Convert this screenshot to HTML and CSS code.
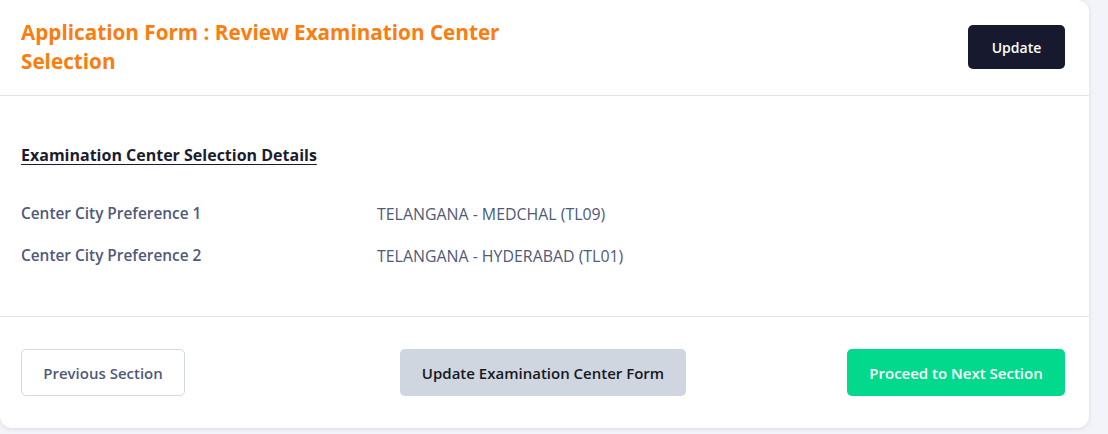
FILE: index.html
```html
<!DOCTYPE html>
<html>
<head>
<meta charset="utf-8">
<link rel="stylesheet" href="styles.css">
</head>
<body>
<div class="card">
  <div class="card-header">
    <h1 class="title">Application Form : Review Examination Center Selection</h1>
    <button class="btn btn-dark">Update</button>
  </div>
  <div class="card-body">
    <h2 class="section-title">Examination Center Selection Details</h2>
    <div class="rows">
      <div class="row"><div class="label">Center City Preference 1</div><div class="value">TELANGANA - MEDCHAL (TL09)</div></div>
      <div class="row"><div class="label">Center City Preference 2</div><div class="value">TELANGANA - HYDERABAD (TL01)</div></div>
    </div>
  </div>
  <div class="card-footer">
    <button class="btn btn-outline">Previous Section</button>
    <button class="btn btn-gray">Update Examination Center Form</button>
    <button class="btn btn-green">Proceed to Next Section</button>
  </div>
</div>
</body>
</html>
```
FILE: styles.css
```css
* { box-sizing: border-box; }
html, body { margin: 0; padding: 0; }
body {
  background: #f3f4f9;
  font-family: "Open Sans", "Liberation Sans", sans-serif;
  width: 1108px;
  height: 434px;
  overflow: hidden;
}
.card {
  width: 1089px;
  height: 428px;
  background: #fff;
  border-radius: 0 12px 12px 12px;
  box-shadow: 0 1px 4px rgba(30, 40, 90, 0.12);
  display: flex;
  flex-direction: column;
}
.card-header {
  height: 96px;
  border-bottom: 1px solid #e2e5ea;
  display: flex;
  justify-content: space-between;
  align-items: flex-start;
  padding: 18px 24px 0 21px;
}
.title {
  margin: 0;
  width: 530px;
  color: #fb7d0f;
  font-size: 20.7px;
  line-height: 29px;
  font-weight: 700;
}
.btn {
  font-family: inherit;
  border-radius: 5px;
  cursor: pointer;
  font-size: 15px;
  font-weight: 600;
}
.btn-dark {
  margin-top: 7px;
  width: 97px;
  height: 44px;
  background: #171a2f;
  color: #fff;
  border: none;
  font-size: 14px;
  font-weight: 600;
}
.card-body {
  height: 221px;
  border-bottom: 1px solid #e2e5ea;
  padding: 47px 21px 0 21px;
}
.section-title {
  margin: 0;
  font-size: 16px;
  line-height: 24px;
  font-weight: 700;
  color: #1b1d2e;
  text-decoration: underline;
  text-underline-offset: 3px;
}
.rows {
  margin-top: 35px;
  display: flex;
  flex-direction: column;
  gap: 18px;
}
.row {
  display: flex;
  line-height: 24px;
  color: #4f5a78;
}
.label {
  width: 356px;
  font-size: 15.4px;
  font-weight: 600;
}
.value {
  font-size: 15.9px;
  font-weight: 400;
}
.card-footer {
  flex: 1;
  display: grid;
  grid-template-columns: 1fr 1fr 1fr;
  align-items: start;
  padding: 32px 24px 0 21px;
}
.btn-outline {
  justify-self: start;
  width: 164px;
  height: 47px;
  background: #fff;
  border: 1px solid #d4d9e1;
  color: #4f5a78;
}
.btn-gray {
  justify-self: center;
  width: 286px;
  height: 47px;
  background: #cfd6df;
  border: none;
  color: #161822;
}
.btn-green {
  justify-self: end;
  width: 218px;
  height: 47px;
  background: #02d98c;
  border: none;
  color: #fff;
}
```
